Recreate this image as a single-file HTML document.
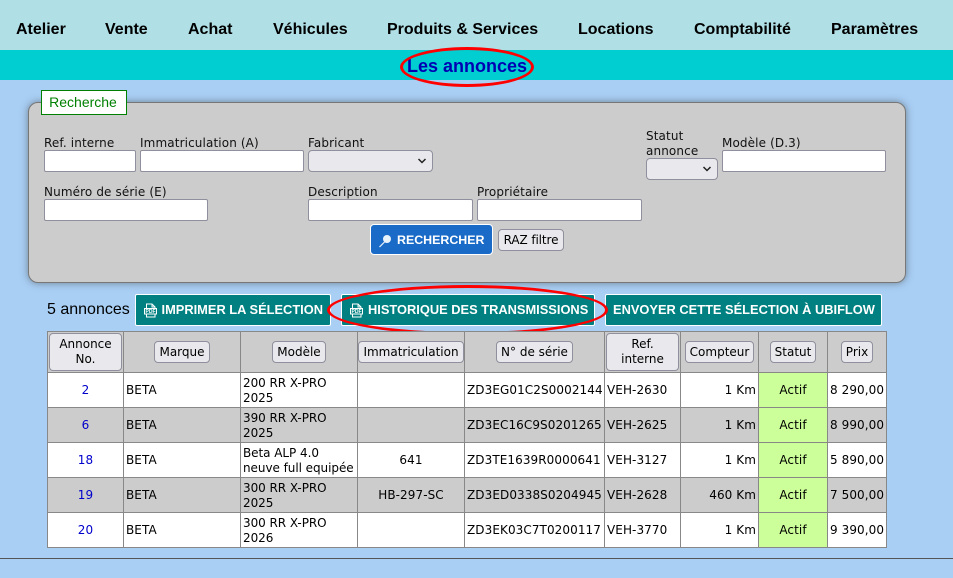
<!DOCTYPE html>
<html lang="fr"><head><meta charset="utf-8"><title>Les annonces</title>
<style>
*{box-sizing:border-box}
html,body{margin:0;padding:0;width:953px;height:578px;overflow:hidden;background:#a9cff5;font-family:"DejaVu Sans",sans-serif;font-size:12px;color:#000}
.a{position:absolute;white-space:nowrap}
.nav{font:bold 16px "Liberation Sans",sans-serif;top:21px;line-height:18px}
.lb{font-size:12px;line-height:15px;color:#111;letter-spacing:.12px}
.in{position:absolute;background:#fff;border:1px solid #8f8f9d;border-radius:2px}
.sel{position:absolute;background:#e9e9ed;border:1px solid #8f8f9d;border-radius:4px}
.sel svg{position:absolute;right:5px;top:7px}
.tb{position:absolute;top:294px;height:32px;background:#008080;border:1px solid #fff;border-radius:2px;color:#fff;font:bold 12.85px "Liberation Sans",sans-serif;line-height:29px;white-space:nowrap}
.tb svg{position:absolute;left:8px;top:8px}
.tb span{position:absolute;top:0}
table{position:absolute;left:47px;top:331px;width:839px;border-collapse:collapse;table-layout:fixed;font-size:12px;line-height:15px;letter-spacing:.08px}
td,th{border:1px solid #888;padding:0 2px;font-weight:normal;overflow:hidden;white-space:nowrap}
th{background:#ccc;text-align:center;height:41px;padding:0;letter-spacing:0}
tr{height:35px}
tr.g td{background:#ccc}
tr.w td{background:#fff}
td.c{text-align:center}td.r{text-align:right}
td.n{text-align:center;color:#00c}
tr td.s{background:#ccff99;text-align:center}
td b{font-weight:normal;position:relative;top:1px;display:block;letter-spacing:-.05px}
.hb{display:inline-block;background:#e9e9ed;border:1px solid #8f8f9d;border-radius:4px;padding:3px 4px 2px;line-height:15px;font-size:12px;vertical-align:middle}
.el{position:absolute;border:3px solid #f00;border-radius:50%}
</style></head><body>
<div class="a" style="left:0;top:0;width:953px;height:50px;background:#b0e0e6"></div>
<div class="a" style="left:0;top:50px;width:953px;height:30px;background:#00ced1"></div>
<div class="a nav" style="left:16px">Atelier</div>
<div class="a nav" style="left:105px">Vente</div>
<div class="a nav" style="left:188px">Achat</div>
<div class="a nav" style="left:273px">Véhicules</div>
<div class="a nav" style="left:387px">Produits &amp; Services</div>
<div class="a nav" style="left:578px">Locations</div>
<div class="a nav" style="left:694px">Comptabilité</div>
<div class="a nav" style="left:831px">Paramètres</div>
<div class="a" style="left:407px;top:56px;font:bold 18px/20px 'Liberation Sans',sans-serif;color:#0000b3">Les annonces</div>
<div class="el" style="left:400px;top:47px;width:134px;height:40px"></div>

<div class="a" style="left:28px;top:102px;width:878px;height:181px;background:#ccc;border:1px solid #777;border-radius:10px;box-shadow:0 0 8px rgba(60,60,60,.55)"></div>
<div class="a" style="left:41px;top:90px;width:86px;height:25px;background:#fff;border:1px solid #008000;color:#008000;font:14px/23px 'Liberation Sans',sans-serif;text-align:center;padding-right:2px">Recherche</div>

<div class="a lb" style="left:44px;top:136px">Ref. interne</div>
<div class="a lb" style="left:140px;top:136px">Immatriculation (A)</div>
<div class="a lb" style="left:308px;top:136px">Fabricant</div>
<div class="a lb" style="left:646px;top:129px">Statut<br>annonce</div>
<div class="a lb" style="left:722px;top:136px">Modèle (D.3)</div>
<div class="in" style="left:44px;top:150px;width:92px;height:22px"></div>
<div class="in" style="left:140px;top:150px;width:164px;height:22px"></div>
<div class="sel" style="left:308px;top:150px;width:125px;height:22px"><svg width="10" height="6" viewBox="0 0 10 6"><path d="M1.500 1l3.500 3.500L8.500 1" fill="none" stroke="#222" stroke-width="1.500"/></svg></div>
<div class="sel" style="left:646px;top:158px;width:72px;height:22px"><svg width="10" height="6" viewBox="0 0 10 6"><path d="M1.500 1l3.500 3.500L8.500 1" fill="none" stroke="#222" stroke-width="1.500"/></svg></div>
<div class="in" style="left:722px;top:150px;width:164px;height:22px"></div>

<div class="a lb" style="left:44px;top:185px">Numéro de série (E)</div>
<div class="a lb" style="left:308px;top:185px">Description</div>
<div class="a lb" style="left:477px;top:185px">Propriétaire</div>
<div class="in" style="left:44px;top:199px;width:164px;height:22px"></div>
<div class="in" style="left:308px;top:199px;width:165px;height:22px"></div>
<div class="in" style="left:477px;top:199px;width:165px;height:22px"></div>

<div class="a" style="left:370px;top:224px;width:123px;height:31px;background:#1a6bc8;border:1px solid #fff;border-radius:4px;color:#fff;font:bold 12.4px/30px 'Liberation Sans',sans-serif;padding-left:26px">RECHERCHER
<svg style="position:absolute;left:7px;top:9px" width="14" height="14" viewBox="0 0 14 14"><circle cx="9" cy="5" r="4" fill="#e8f2fb"/><path d="M6.500 8L1.500 13" stroke="#e8f2fb" stroke-width="1.200" fill="none"/></svg></div>
<div class="a" style="left:498px;top:229px;width:66px;height:22px;background:#e9e9ed;border:1px solid #8f8f9d;border-radius:4px;text-align:center;line-height:21px;font-size:12px;letter-spacing:-.1px">RAZ filtre</div>

<div class="a" style="left:47px;top:301px;font:16px/18px 'Liberation Sans',sans-serif">5 annonces</div>
<div class="tb" style="left:135px;width:196px"><svg width="13" height="15" viewBox="0 0 13 15"><path d="M2.500 5V1h5.500l3 3V14H2.500V11M8 1v3h3" fill="none" stroke="#fff" stroke-width="1"/><rect x=".5" y="5.500" width="12" height="5.500" fill="#008080" stroke="#fff"/><text x="6.500" y="10.200" text-anchor="middle" font-family="Liberation Sans,sans-serif" font-size="5" font-weight="bold" fill="#fff">PDF</text></svg><span style="left:25.500px">IMPRIMER LA SÉLECTION</span></div>
<div class="tb" style="left:341px;width:254px"><svg width="13" height="15" viewBox="0 0 13 15"><path d="M2.500 5V1h5.500l3 3V14H2.500V11M8 1v3h3" fill="none" stroke="#fff" stroke-width="1"/><rect x=".5" y="5.500" width="12" height="5.500" fill="#008080" stroke="#fff"/><text x="6.500" y="10.200" text-anchor="middle" font-family="Liberation Sans,sans-serif" font-size="5" font-weight="bold" fill="#fff">PDF</text></svg><span style="left:26px">HISTORIQUE DES TRANSMISSIONS</span></div>
<div class="tb" style="left:605px;width:277px"><span style="left:7px">ENVOYER CETTE SÉLECTION À UBIFLOW</span></div>
<div class="el" style="left:327px;top:285px;width:281px;height:50px"></div>

<table>
<colgroup><col style="width:76px"><col style="width:117px"><col style="width:117px"><col style="width:107px"><col style="width:140px"><col style="width:76px"><col style="width:78px"><col style="width:69px"><col style="width:59px"></colgroup>
<tr style="height:41px"><th><span class="hb" style="width:73px;height:38px;padding:3px 0">Annonce<br>No.</span></th><th><span class="hb">Marque</span></th><th><span class="hb">Modèle</span></th><th><span class="hb">Immatriculation</span></th><th><span class="hb">N° de série</span></th><th><span class="hb" style="width:73px;height:38px;padding:3px 0">Ref.<br>interne</span></th><th><span class="hb">Compteur</span></th><th><span class="hb">Statut</span></th><th><span class="hb">Prix</span></th></tr>
<tr class="w"><td class="n">2</td><td>BETA</td><td><b>200 RR X-PRO<br>2025</b></td><td class="c"></td><td>ZD3EG01C2S0002144</td><td>VEH-2630</td><td class="r">1 Km</td><td class="s">Actif</td><td class="r">8 290,00</td></tr>
<tr class="g"><td class="n">6</td><td>BETA</td><td><b>390 RR X-PRO<br>2025</b></td><td class="c"></td><td>ZD3EC16C9S0201265</td><td>VEH-2625</td><td class="r">1 Km</td><td class="s">Actif</td><td class="r">8 990,00</td></tr>
<tr class="w"><td class="n">18</td><td>BETA</td><td><b>Beta ALP 4.0<br>neuve full equipée</b></td><td class="c">641</td><td>ZD3TE1639R0000641</td><td>VEH-3127</td><td class="r">1 Km</td><td class="s">Actif</td><td class="r">5 890,00</td></tr>
<tr class="g"><td class="n">19</td><td>BETA</td><td><b>300 RR X-PRO<br>2025</b></td><td class="c">HB-297-SC</td><td>ZD3ED0338S0204945</td><td>VEH-2628</td><td class="r">460 Km</td><td class="s">Actif</td><td class="r">7 500,00</td></tr>
<tr class="w"><td class="n">20</td><td>BETA</td><td><b>300 RR X-PRO<br>2026</b></td><td class="c"></td><td>ZD3EK03C7T0200117</td><td>VEH-3770</td><td class="r">1 Km</td><td class="s">Actif</td><td class="r">9 390,00</td></tr>
</table>
<div class="a" style="left:0;top:558px;width:953px;height:1px;background:#555"></div>
</body></html>
